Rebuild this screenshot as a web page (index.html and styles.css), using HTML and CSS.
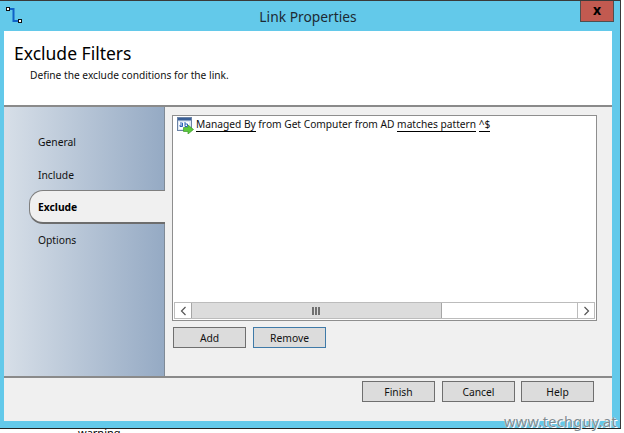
FILE: index.html
```html
<!DOCTYPE html>
<html lang="en">
<head>
  <meta charset="UTF-8" />
  <title>Link Properties</title>
  <link rel="stylesheet" href="styles.css">
</head>
<body>

  <div class="window">
    <!-- TITLE BAR -->
    <div class="titlebar">
      <svg class="app-icon" width="20" height="20" viewBox="0 0 20 20">
        <path d="M4.5 3H8.5V15H14" fill="none" stroke="#0f62c8" stroke-width="2"/>
        <rect x="1.5" y="1.5" width="3" height="3" fill="#fff" stroke="#111"/>
        <rect x="13.5" y="13.5" width="3" height="3" fill="#fff" stroke="#111"/>
      </svg>
      <div class="title">Link Properties</div>
      <div class="close"><span>x</span></div>
    </div>

    <div class="client">
      <!-- HEADER -->
      <div class="header">
        <h1>Exclude Filters</h1>
        <p>Define the exclude conditions for the link.</p>
      </div>

      <div class="middle">
        <!-- SIDEBAR -->
        <div class="sidebar">
          <div class="tab">General</div>
          <div class="tab">Include</div>
          <div class="tab active">Exclude</div>
          <div class="tab">Options</div>
        </div>

        <!-- MAIN -->
        <div class="main">
          <div class="listbox">
            <div class="rule">
              <svg class="rule-icon" width="17" height="17" viewBox="0 0 17 17">
                <rect x="0.5" y="0.5" width="14" height="13" fill="#dfe8f4" stroke="#6b83a6"/>
                <rect x="1" y="1" width="13" height="2.5" fill="#3a5f96"/>
                <rect x="2" y="5" width="10" height="7" fill="#fff"/>
                <path d="M3 6h2.5v3.5H3V8h2.5M8 5v4.5h2.5V7H8" stroke="#2c62b8" stroke-width="1" fill="none"/>
                <path d="M6.5 10.5H11V8L16.5 12.5L11 17V14.5H6.5Z" fill="#5cc93c" stroke="#3c9a2a" stroke-width="0.7"/>
              </svg>
              <div class="rule-text"><span class="link">Managed By</span> from Get Computer from AD <span class="link">matches pattern</span> <span class="link">^$</span></div>
            </div>
            <div class="scrollbar">
              <div class="arrow">
                <svg width="7" height="10" viewBox="0 0 7 10"><path d="M5.5 1L1.5 5L5.5 9" fill="none" stroke="#555" stroke-width="1.2"/></svg>
              </div>
              <div class="thumb">
                <svg width="9" height="8" viewBox="0 0 9 8"><path d="M1 0v8M4 0v8M7 0v8" stroke="#555" stroke-width="1.6"/></svg>
              </div>
              <div class="track"></div>
              <div class="arrow">
                <svg width="7" height="10" viewBox="0 0 7 10"><path d="M1.5 1L5.5 5L1.5 9" fill="none" stroke="#555" stroke-width="1.2"/></svg>
              </div>
            </div>
          </div>
          <div class="list-buttons">
            <button>Add</button>
            <button class="focused">Remove</button>
          </div>
        </div>
      </div>

      <!-- FOOTER -->
      <div class="footer">
        <button>Finish</button>
        <button>Cancel</button>
        <button>Help</button>
      </div>
    </div>
  </div>

  <div class="behind">warning</div>
  <div class="watermark">www.techguy.at</div>

</body>
</html>
```

FILE: styles.css
```css
* {
  box-sizing: border-box;
  font-family: "Noto Sans", "Open Sans", sans-serif;
}

html, body {
  height: 100%;
}

body {
  margin: 0;
  background: #fff;
  overflow: hidden;
  position: relative;
}

.window {
  width: 621px;
  height: 429px;
  background: #63c9ea;
  border-top: 1px solid #3a3a3a;
  border-right: 1px solid #3a3a3a;
  border-bottom: 1px solid #222;
  padding: 0 8px 7px 4px;
  display: flex;
  flex-direction: column;
}

.titlebar {
  height: 30px;
  flex: none;
  position: relative;
  display: flex;
  align-items: center;
  justify-content: center;
}

.app-icon {
  position: absolute;
  left: 1px;
  top: 5px;
}

.title {
  font-size: 13.8px;
  color: #1d2a33;
}

.close {
  position: absolute;
  top: 0;
  right: -2px;
  width: 34px;
  height: 21px;
  background: #c25a50;
  border: 1px solid #4f4f4f;
  border-top: none;
  display: flex;
  align-items: center;
  justify-content: center;
}

.close span {
  font-size: 14px;
  font-weight: bold;
  color: #000;
  line-height: 1;
  margin-top: -3px;
}

.client {
  flex: 1;
  display: flex;
  flex-direction: column;
  background: #f0f0f0;
  min-height: 0;
}

.header {
  height: 76px;
  flex: none;
  background: #fff;
  border-bottom: 2px solid #8a8a8a;
  padding: 11px 10px 0;
}

.header h1 {
  margin: 0;
  font-size: 17.5px;
  font-weight: normal;
  color: #000;
  line-height: 22px;
}

.header p {
  margin: 4px 0 0 16px;
  font-size: 10.2px;
  line-height: 15px;
  color: #111;
}

.middle {
  flex: 1;
  display: flex;
  min-height: 0;
}

.sidebar {
  width: 161px;
  flex: none;
  background: linear-gradient(to right, #d7dfe8, #95aac4);
  border-right: 1px solid #7f8a96;
  padding-top: 19px;
  display: flex;
  flex-direction: column;
}

.tab {
  height: 33px;
  font-size: 10.3px;
  line-height: 33px;
  padding-left: 34px;
  color: #111;
}

.tab.active {
  height: 34px;
  margin-top: -2px;
  margin-left: 25px;
  margin-right: -1px;
  padding-left: 8px;
  background: #f0f0f0;
  border: 1px solid #7f7f7f;
  border-right: none;
  border-bottom: 2px solid #6d6d6d;
  border-radius: 14px 0 0 14px;
  font-weight: bold;
  color: #000;
  line-height: 32px;
}

.main {
  flex: 1;
  padding: 8px 15px 0 7px;
  display: flex;
  flex-direction: column;
}

.listbox {
  height: 206px;
  background: #fff;
  border: 1px solid #8e8e8e;
  display: flex;
  flex-direction: column;
  justify-content: space-between;
}

.rule {
  padding: 1px 0 0 4px;
  display: flex;
  align-items: flex-start;
}

.rule-icon {
  margin-right: 2px;
  flex: none;
}

.rule-text {
  font-size: 10.2px;
  color: #111;
  line-height: 14px;
}

.link {
  border-bottom: 1px solid #000;
}

.scrollbar {
  height: 17px;
  margin: 0 1px 1px;
  display: flex;
  border: 1px solid #bcbcbc;
}

.arrow {
  width: 16px;
  flex: none;
  background: #fff;
  display: flex;
  align-items: center;
  justify-content: center;
}

.thumb {
  width: 251px;
  flex: none;
  background: #dcdcdc;
  border-left: 1px solid #a6a6a6;
  border-right: 1px solid #a6a6a6;
  display: flex;
  align-items: center;
  justify-content: center;
}

.track {
  flex: 1;
  background: #fff;
  border-right: 1px solid #bcbcbc;
}

button {
  width: 73px;
  height: 21px;
  padding: 0;
  background: #dcdcdc;
  border: 1px solid #6f6f6f;
  font-size: 10.3px;
  color: #111;
}

button.focused {
  border-color: #3f7aa8;
}

.list-buttons {
  display: flex;
  gap: 7px;
  margin-top: 6px;
  padding-left: 1px;
}

.footer {
  height: 45px;
  flex: none;
  border-top: 2px solid #8a8a8a;
  padding: 3px 18px 0 0;
  display: flex;
  justify-content: flex-end;
  gap: 6px;
}

.footer button:first-child {
  margin-right: 1px;
}

.behind {
  position: absolute;
  left: 78px;
  top: 426px;
  font-size: 11px;
  color: #000;
  line-height: 14px;
}

.watermark {
  position: absolute;
  right: 7px;
  top: 411px;
  font-size: 14.5px;
  letter-spacing: 0.3px;
  color: #7f8a90;
  text-shadow: 0 0 1px #fff, 1px 1px 0 #fff;
}
```
